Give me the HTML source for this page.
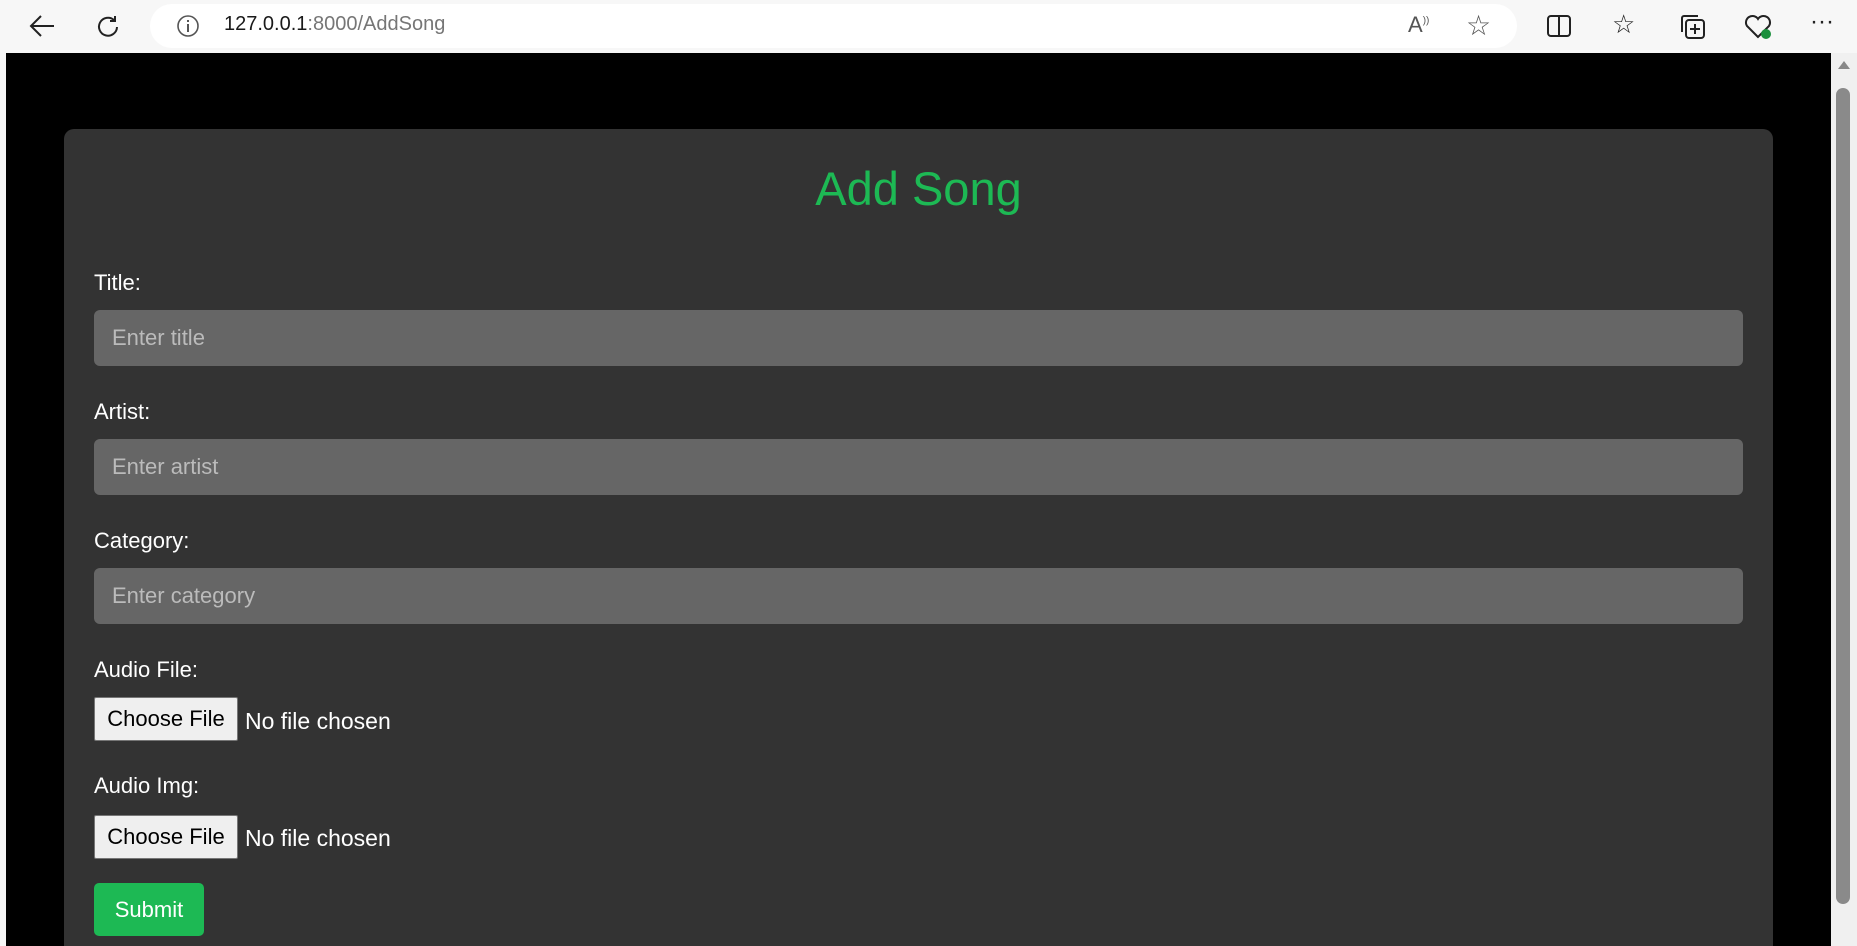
<!DOCTYPE html>
<html><head><style>
*{box-sizing:border-box;margin:0;padding:0}
body{width:1857px;height:946px;overflow:hidden;background:#f7f7f7;font-family:"Segoe UI","Liberation Sans",sans-serif;position:relative}
.bar{position:absolute;left:0;top:0;width:1857px;height:53px;background:#f7f7f7}
.addr{position:absolute;left:150px;top:4px;width:1367px;height:44px;background:#fff;border-radius:22px}
.url{position:absolute;left:224px;top:13px;font-size:20px;color:#1a1a1a}
.url span{color:#767676}
.ic{position:absolute;top:14px}
.page{position:absolute;left:6px;top:53px;width:1825px;height:893px;background:#000}
.sb{position:absolute;left:1831px;top:53px;width:26px;height:893px;background:#f0f0f0}
.thumb{position:absolute;left:1836px;top:88px;width:14px;height:816px;background:#8a8a8a;border-radius:7px}
.card{position:absolute;left:64px;top:129px;width:1709px;height:817px;background:#333;border-radius:10px 10px 0 0}
h1{position:absolute;left:-10px;width:100%;top:161px;text-align:center;color:#1db954;font-size:47px;font-weight:normal}
.lbl{position:absolute;left:94px;color:#fff;font-size:22px}
.inp{position:absolute;left:94px;width:1649px;height:56px;background:#666;border-radius:6px;color:#bbb;font-size:22px;padding:15px 18px}
.btn{position:absolute;left:94px;width:144px;height:44px;background:#efefef;border:1px solid #767676;border-radius:2px;color:#000;font-size:22px;text-align:center;line-height:42px}
.nf{position:absolute;left:245px;color:#fff;font-size:23px}
.sub{position:absolute;left:94px;top:883px;width:110px;height:53px;background:#1db954;border-radius:5px;color:#fff;font-size:22px;text-align:center;line-height:54px}
</style></head><body>
<div class="bar">
<svg class="ic" style="left:28px" width="28" height="24" viewBox="0 0 28 24"><path d="M26 12H3M13 2L3 12l10 10" stroke="#222" stroke-width="2" fill="none"/></svg>
<svg class="ic" style="left:95px" width="26" height="26" viewBox="0 0 26 26"><path d="M22 13a9 9 0 1 1-3-7M20 2v5h-5" stroke="#222" stroke-width="2" fill="none"/></svg>
<div class="addr">
<svg class="ic" style="left:26px;top:10px" width="24" height="24"><circle cx="12" cy="12" r="10" stroke="#555" stroke-width="1.6" fill="none"/><path d="M12 10v8M12 6v2" stroke="#555" stroke-width="2"/></svg>
</div>
<div class="url">127.0.0.1<span>:8000/AddSong</span></div>
<div style="position:absolute;left:1408px;top:12px;font-size:22px;color:#555">A<sup style="font-size:10px">))</sup></div>
<div style="position:absolute;left:1466px;top:9px;font-size:28px;color:#555">☆</div>
<svg class="ic" style="left:1546px" width="26" height="24"><rect x="2" y="2" width="22" height="20" rx="3" stroke="#222" stroke-width="2" fill="none"/><path d="M13 2v20" stroke="#222" stroke-width="2"/></svg>
<div style="position:absolute;left:1612px;top:9px;font-size:26px;color:#222">☆</div>
<svg class="ic" style="left:1680px" width="26" height="26"><rect x="6" y="6" width="18" height="18" rx="3" stroke="#222" stroke-width="2" fill="none"/><path d="M2 18V4a2 2 0 0 1 2-2h14M15 10v10M10 15h10" stroke="#222" stroke-width="2" fill="none"/></svg>
<svg class="ic" style="left:1744px" width="28" height="26"><path d="M14 23L3 12a6 6 0 0 1 11-7 6 6 0 0 1 11 7z" stroke="#222" stroke-width="2" fill="none"/><circle cx="22" cy="20" r="5" fill="#1a8f3c"/></svg>
<div style="position:absolute;left:1810px;top:8px;font-size:24px;color:#222">···</div>
</div>
<div class="page"></div>
<div class="sb"><div style="position:absolute;left:7px;top:8px;width:0;height:0;border:6px solid transparent;border-bottom:8px solid #888;border-top:0"></div></div>
<div class="thumb"></div>
<div class="card"></div>
<h1>Add Song</h1>
<div class="lbl" style="top:270px">Title:</div>
<div class="inp" style="top:310px">Enter title</div>
<div class="lbl" style="top:399px">Artist:</div>
<div class="inp" style="top:439px">Enter artist</div>
<div class="lbl" style="top:528px">Category:</div>
<div class="inp" style="top:568px">Enter category</div>
<div class="lbl" style="top:657px">Audio File:</div>
<div class="btn" style="top:697px">Choose File</div>
<div class="nf" style="top:708px">No file chosen</div>
<div class="lbl" style="top:773px">Audio Img:</div>
<div class="btn" style="top:815px">Choose File</div>
<div class="nf" style="top:825px">No file chosen</div>
<div class="sub">Submit</div>
</body></html>
